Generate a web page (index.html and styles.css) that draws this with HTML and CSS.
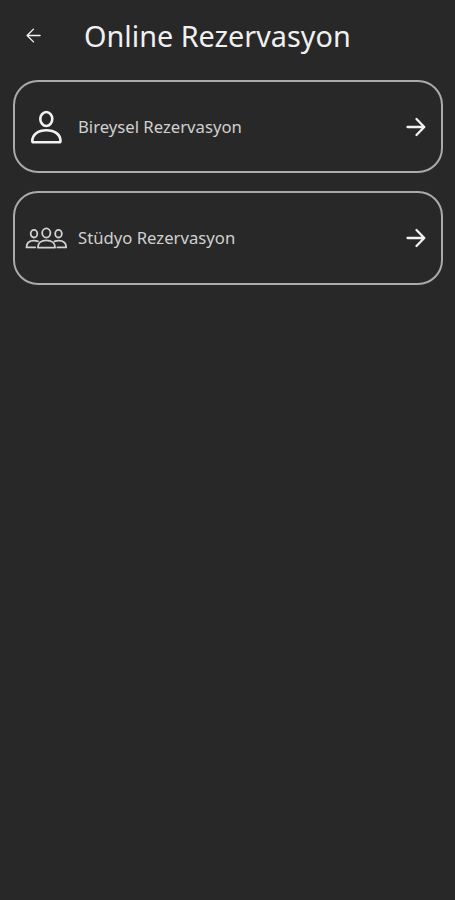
FILE: index.html
```html
<!DOCTYPE html>
<html lang="tr">
<head>
<meta charset="utf-8">
<title>Online Rezervasyon</title>
<link rel="stylesheet" href="styles.css">
</head>
<body>
<header class="header">
  <svg class="back" viewBox="0 0 16 16"><path d="M15 8H1.5M8 1.2L1.2 8L8 14.8"/></svg>
  <h1 class="title">Online Rezervasyon</h1>
</header>
<main class="list">
  <a class="card">
    <svg class="icon" viewBox="0 0 44 40"><ellipse cx="22.3" cy="12" rx="6" ry="7"/><path d="M8.3 34C8.3 27.5 14 23.2 22.3 23.2S36.5 27.5 36.5 34Q36.5 35.3 35.2 35.3H9.6Q8.3 35.3 8.3 34Z"/></svg>
    <span class="label">Bireysel Rezervasyon</span>
    <svg class="arrow" viewBox="0 0 20 20"><path d="M1.5 10H18M10.5 2L18.3 10L10.5 18"/></svg>
  </a>
  <a class="card">
    <svg class="icon group" viewBox="0 0 44 40"><ellipse cx="22.3" cy="15" rx="4.1" ry="4.6"/><path d="M13.9 29.6C13.9 25 17.3 22.4 22.3 22.4S31.1 25 31.1 29.6Z"/><ellipse cx="10" cy="15.7" rx="3.3" ry="3.8"/><ellipse cx="34.5" cy="15.7" rx="3.3" ry="3.8"/><path d="M11.2 29.4H2.5C2.5 25 5.4 22.6 10 22.6Q12.2 22.6 14 23.4M33.4 29.4H42.2C42.2 25 39.1 22.6 34.5 22.6Q32.3 22.6 30.5 23.4"/></svg>
    <span class="label">Stüdyo Rezervasyon</span>
    <svg class="arrow" viewBox="0 0 20 20"><path d="M1.5 10H18M10.5 2L18.3 10L10.5 18"/></svg>
  </a>
</main>
</body>
</html>
```
FILE: styles.css
```css
* { box-sizing: border-box; }
body {
  margin: 0;
  min-height: 900px;
  background: #282828;
  color: #f0f0f0;
  font-family: "Noto Sans", sans-serif;
}
.header {
  display: flex;
  align-items: center;
  height: 72px;
  padding-left: 26px;
}
.title {
  margin: 0 0 0 43px;
  font-size: 28.8px;
  font-weight: 400;
  line-height: 40px;
  white-space: nowrap;
}
svg {
  flex: none;
  fill: none;
  stroke: #f2f2f2;
  stroke-linecap: round;
  stroke-linejoin: round;
}
.back { width: 15px; height: 15px; margin-top: -2px; stroke-width: 1.5; }
.list {
  display: flex;
  flex-direction: column;
  gap: 18px;
  padding: 8px 12px 0 13px;
}
.card {
  display: flex;
  align-items: center;
  height: 93px;
  padding: 0 14px 0 8px;
  border: 2px solid #aaa;
  border-radius: 25px;
}
.card + .card { height: 94px; padding-bottom: 1px; }
.icon { width: 44px; height: 40px; margin-left: 1px; stroke-width: 2.6; }
.group { stroke: #d2d2d2; stroke-width: 1.8; }
.label {
  flex: 1;
  margin-left: 10px;
  color: #d0d0d0;
  font-size: 16.7px;
  line-height: 24px;
}
.arrow { width: 20px; height: 20px; margin-right: 1px; stroke-width: 2.3; }
```
